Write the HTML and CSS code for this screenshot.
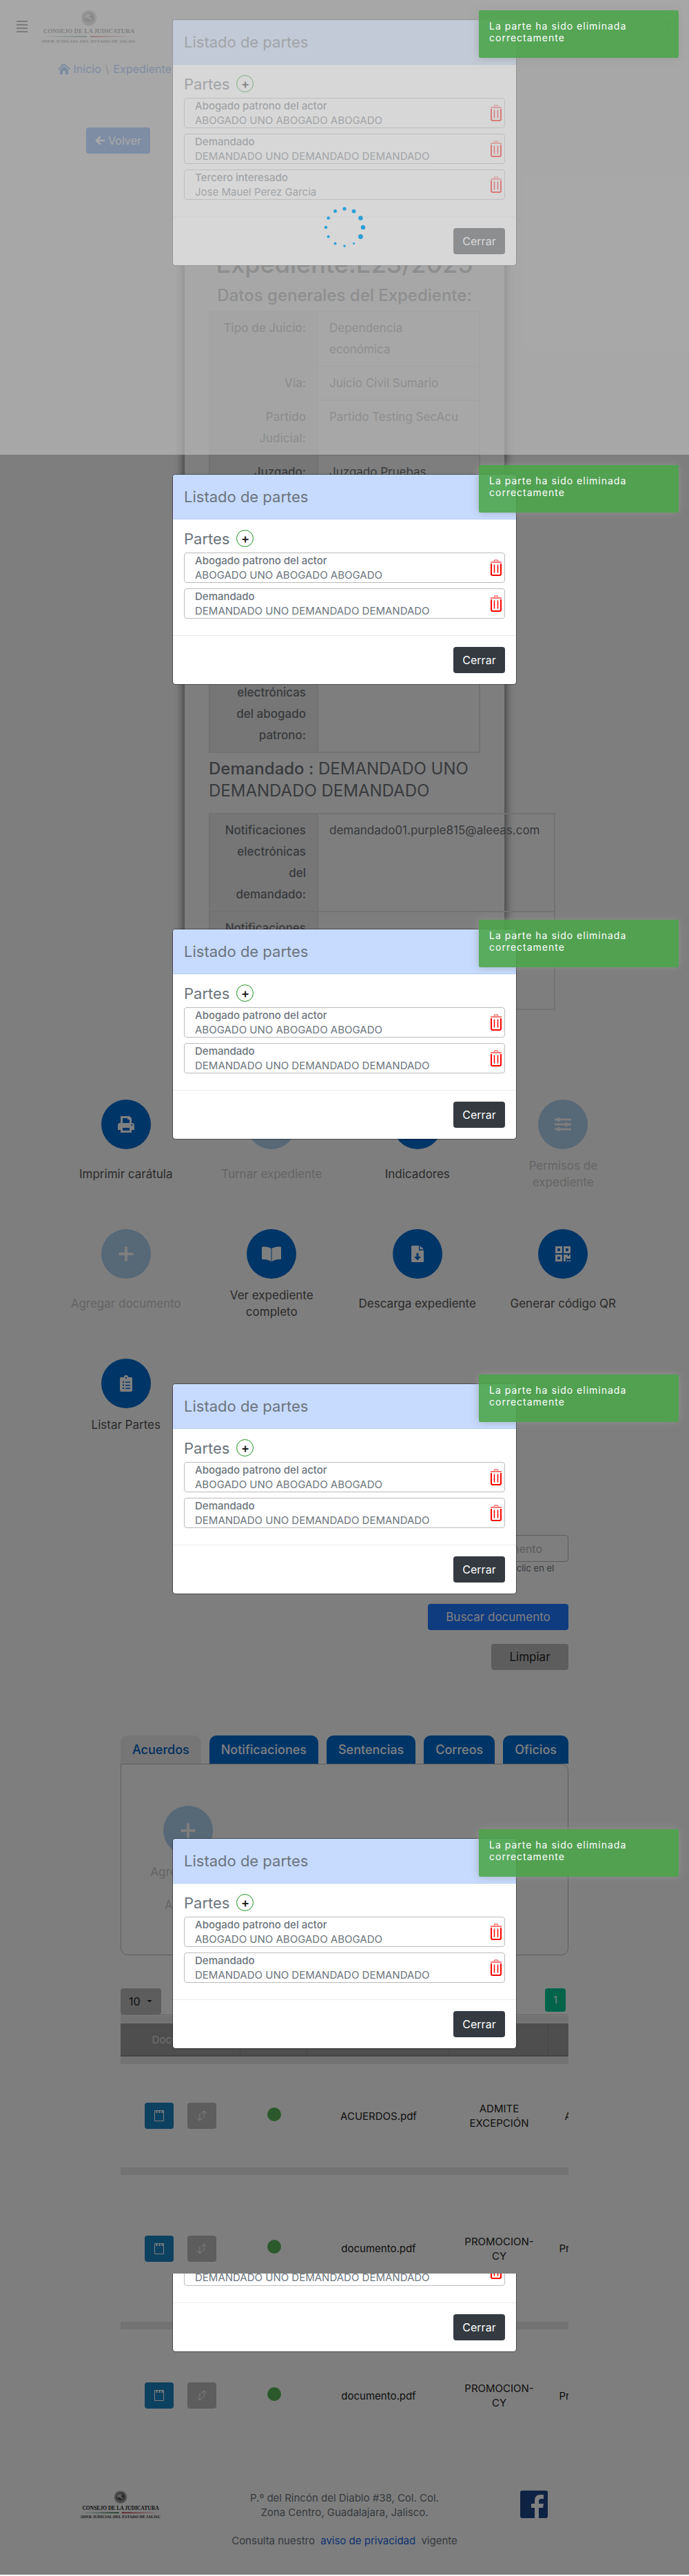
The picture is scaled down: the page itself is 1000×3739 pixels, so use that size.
FILE: index.html
```html
<!DOCTYPE html>
<html lang="es">
<head>
<meta charset="utf-8">
<meta name="viewport" content="width=device-width, initial-scale=1">
<title>Expediente E23/2025</title>
<link rel="stylesheet" href="styles.css">
</head>
<body>
<svg width="0" height="0" class="defs" aria-hidden="true">
  <defs>
    <linearGradient id="green" x1="0" x2="1"><stop offset="0" stop-color="#2c6e49" stop-opacity="0"/><stop offset="1" stop-color="#14602f"/></linearGradient>
    <linearGradient id="red" x1="0" x2="1"><stop offset="0" stop-color="#a8141c"/><stop offset="1" stop-color="#c03038" stop-opacity="0"/></linearGradient>
  </defs>
  <symbol id="seal" viewBox="0 0 138 48">
    <circle cx="69" cy="11" r="11" fill="#8a8a8a"/>
    <circle cx="69" cy="11" r="9.5" fill="none" stroke="#ddd" stroke-width=".8"/>
    <circle cx="69" cy="11" r="7.5" fill="#555"/>
    <path d="M63 8c3-4 8-4 10 0-3-1-4 0-3 2l4 3-3 1-4-3-4 1zM62 14c4 4 10 4 14-1-2 6-11 7-14 1z" fill="#bbb"/>
    <path d="M0 38.500L10 37h56v2H10z" fill="url(#green)"/>
    <path d="M71 37h56l10 1.500L127 39H71z" fill="url(#red)"/>
  </symbol>
  <symbol id="trash" viewBox="0 0 16 24">
    <path d="M5 3.500L6 1h4l1 2.500" fill="none" stroke="#f77" stroke-width="1.500"/>
    <path d="M0 4h16" stroke="#f77" stroke-width="2"/>
    <path d="M1 6v15q0 2 2 2h10q2 0 2-2V6" fill="none" stroke="#f00" stroke-width="2"/>
    <path d="M5.500 7.500v12M10.500 7.500v12" stroke="#f00" stroke-width="1.500"/>
  </symbol>
  <symbol id="cross" viewBox="0 0 24 24"><path d="M12 3v18M3 12h18" stroke="#fff" stroke-width="4" stroke-linecap="round"/></symbol>
  <symbol id="pad" viewBox="0 0 16 18"><path d="M1.500 1.500h13v15h-13z" fill="none" stroke="#fff"/><path d="M3.500 3.500h10" stroke="#fff" stroke-width="3" stroke-dasharray="2 2"/></symbol>
  <symbol id="swap" viewBox="0 0 16 18"><path d="M5 6v10M1 12l4 4 4-4M11 12V2M7 6l4-4 4 4" fill="none" stroke="#fff"/></symbol>
</svg>

<div class="page">
  <header class="top">
    <button class="menu" aria-label="Menú"><span></span><span></span><span></span><span></span></button>
    <svg class="logo" viewBox="0 0 138 48"><use href="#seal"/><text x="69" y="33" text-anchor="middle" class="logo-main">CONSEJO DE LA JUDICATURA</text><text x="69" y="47" text-anchor="middle" class="logo-sub">PODER JUDICIAL DEL ESTADO DE JALISCO</text></svg>
    <span class="user">VALDEZ</span>
  </header>

  <nav class="crumbs">
    <a href="#"><svg width="18" height="16" viewBox="0 0 18 16"><path d="M9 0l9 8-1.200 1.300L9 2.500 1.200 9.300 0 8l5-4.500V1h2v1zM9 4l6 5.200V16h-4v-5H7v5H3V9.200z" fill="currentColor"/></svg> Inicio</a>
    <span>\</span>
    <a href="#">Expediente</a>
  </nav>

  <button class="back"><svg width="14" height="14" viewBox="0 0 14 14"><path d="M7.500 1.500L2 7l5.500 5.500M2 7h12" fill="none" stroke="#fff" stroke-width="2.600"/></svg> Volver</button>

  <main>
    <section class="card">
      <h1>Expediente:E23/2025</h1>
      <h2>Datos generales del Expediente:</h2>
      <table class="data">
        <tr><th>Tipo de Juicio:</th><td>Dependencia<br>económica</td></tr>
        <tr><th>Vía:</th><td>Juicio Civil Sumario</td></tr>
        <tr><th>Partido<br>Judicial:</th><td>Partido Testing SecAcu</td></tr>
        <tr><th>Juzgado:</th><td>Juzgado Pruebas<br>SecAcu</td></tr>
      </table>
      <h3 class="lawyer"><b>Abogado patrono del actor :</b> ABOGADO UNO ABOGADO</h3>
      <table class="data">
        <tr><th>Notificaciones<br>electrónicas<br>del abogado<br>patrono:</th><td></td></tr>
      </table>
      <h3><b>Demandado :</b> DEMANDADO UNO DEMANDADO DEMANDADO</h3>
      <table class="data wide">
        <tr><th>Notificaciones<br>electrónicas<br>del<br>demandado:</th><td>demandado01.purple815@aleeas.com</td></tr>
        <tr><th>Notificaciones<br>electrónicas<br>del abogado<br>patrono:</th><td></td></tr>
      </table>
    </section>

    <section class="actions">
      <button><i><svg width="24" height="24" viewBox="0 0 24 24"><path d="M4 0h13l3 3v7h2l2 2v8h-4v4H4v-4H0v-8l2-2h2zM7 3v7h10V5h-3V3zM7 17v4h10v-4zM19.500 12v2h2v-2z" fill="#fff" fill-rule="evenodd"/></svg></i><span>Imprimir carátula</span></button>
      <button disabled><i><svg width="24" height="24"><use href="#cross"/></svg></i><span>Turnar expediente</span></button>
      <button><i><svg width="24" height="24" viewBox="0 0 24 24"><path d="M2 2v20h20M7 18v-6M12 18V7M17 18v-9" fill="none" stroke="#fff" stroke-width="3"/></svg></i><span>Indicadores</span></button>
      <button disabled><i><svg width="24" height="24" viewBox="0 0 24 24"><path d="M0 5h24M0 12h24M0 19h24M6 2v6M17 9v6M6 16v6" stroke="#fff" stroke-width="3"/></svg></i><span>Permisos de<br>expediente</span></button>
      <button disabled><i><svg width="24" height="24"><use href="#cross"/></svg></i><span>Agregar documento</span></button>
      <button><i><svg width="28" height="22" viewBox="0 0 28 22"><path d="M13.500 3C10 1 5 .5 1.500.5Q0 .5 0 2v16q0 1 1.500 1c4 0 8 .5 12 3zM14.500 3C18 1 23 .5 26.500.5Q28 .5 28 2v16q0 1-1.500 1c-4 0-8 .5-12 3z" fill="#fff"/></svg></i><span>Ver expediente<br>completo</span></button>
      <button><i><svg width="18" height="24" viewBox="0 0 18 24"><path d="M1.500 0H11v7h7v15.500q0 1.500-1.500 1.500h-15Q0 24 0 22.500v-21Q0 0 1.500 0zM12.500 0L18 5.500h-5.500zM7.500 11v5H4l5 5.500 5-5.500h-3.500v-5z" fill="#fff" fill-rule="evenodd"/></svg></i><span>Descarga expediente</span></button>
      <button><i><svg width="22" height="22" viewBox="0 0 22 22"><path d="M0 0h10v10H0zM3 3v4h4V3zM12 0h10v10H12zM15 3v4h4V3zM0 12h10v10H0zM3 15v4h4v-4zM12 12h6v2h2v-2h2v6h-6v-2h-1v6h-3zM17 20h2v2h-2zM20 20h2v2h-2z" fill="#fff" fill-rule="evenodd"/></svg></i><span>Generar código QR</span></button>
      <button><i><svg width="18" height="24" viewBox="0 0 18 24"><path d="M2 3h4a3 3 0 016 0h4q2 0 2 2v17q0 2-2 2H2q-2 0-2-2V5q0-2 2-2zM8 3h2v2H8zM4 9v2h2V9zM8 9.500V11h7V9.500zM4 13.500v2h2v-2zM8 14v1.500h7V14zM4 18v2h2v-2zM8 18.500V20h7v-1.500z" fill="#fff" fill-rule="evenodd"/></svg></i><span>Listar Partes</span></button>
    </section>

    <form class="search">
      <input type="text" id="doc" placeholder="Nombre del documento">
      <label for="doc">Presiona enter o haz clic en el<br>botón</label>
      <button type="button" class="find">Buscar documento</button>
      <button type="button" class="clear">Limpiar</button>
    </form>

    <section class="docs">
      <nav class="tabs">
        <button class="on">Acuerdos</button><button>Notificaciones</button><button>Sentencias</button><button>Correos</button><button>Oficios</button>
      </nav>
      <div class="panel">
        <button class="add" disabled><i><svg width="24" height="24"><use href="#cross"/></svg></i><span>Agregar texto<br>como<br>Acuerdo</span></button>
      </div>
      <div class="pager">
        <select aria-label="Registros por página"><option>10</option></select>
        <button>1</button>
      </div>
      <div class="scroll">
        <table class="grid">
          <colgroup><col class="c1"><col class="c2"><col class="c3"><col class="c4"><col class="c5"></colgroup>
          <thead><tr><th>Documento</th><th></th><th>Nombre</th><th>Materia</th><th></th></tr></thead>
          <tbody>
            <tr class="r1"><td><div class="tools"><button aria-label="Ver"><svg width="16" height="18"><use href="#pad"/></svg></button><button class="off" aria-label="Mover"><svg width="16" height="18"><use href="#swap"/></svg></button></div></td><td><span class="dot"></span></td><td>ACUERDOS.pdf</td><td>ADMITE EXCEPCIÓN</td><td>Acuerdo</td></tr>
            <tr class="r2"><td><div class="tools"><button aria-label="Ver"><svg width="16" height="18"><use href="#pad"/></svg></button><button class="off" aria-label="Mover"><svg width="16" height="18"><use href="#swap"/></svg></button></div></td><td><span class="dot"></span></td><td>documento.pdf</td><td>PROMOCION-CY</td><td>Promoción</td></tr>
            <tr class="r3"><td><div class="tools"><button aria-label="Ver"><svg width="16" height="18"><use href="#pad"/></svg></button><button class="off" aria-label="Mover"><svg width="16" height="18"><use href="#swap"/></svg></button></div></td><td><span class="dot"></span></td><td>documento.pdf</td><td>PROMOCION-CY</td><td>Promoción</td></tr>
          </tbody>
        </table>
      </div>
    </section>
  </main>

  <footer class="foot">
    <svg class="foot-logo" viewBox="0 0 138 48"><use href="#seal"/><text x="69" y="33" text-anchor="middle" class="logo-main">CONSEJO DE LA JUDICATURA</text><text x="69" y="47" text-anchor="middle" class="logo-sub">PODER JUDICIAL DEL ESTADO DE JALISCO</text></svg>
    <p>P.º del Rincón del Diablo #38, Col. Col.<br>Zona Centro, Guadalajara, Jalisco.</p>
    <a href="#" aria-label="Facebook"><svg width="40" height="40" viewBox="0 0 40 40"><rect width="40" height="40" rx="3" fill="#1d4489"/><path d="M21 40V25h-5v-6h5v-4c0-6 3-9 8-9h5v6h-3c-3 0-4 1-4 4v3h7l-1 6h-6v15z" fill="#fff"/></svg></a>
    <p class="privacy">Consulta nuestro <a href="#">aviso de privacidad</a> vigente</p>
  </footer>
</div>

<div class="overlay">
  <div class="view">
    <div class="modal" role="dialog" aria-label="Listado de partes">
      <h4>Listado de partes</h4>
      <div class="body">
        <div class="parts">Partes <button aria-label="Agregar parte">+</button></div>
        <div class="item"><p><b>Abogado patrono del actor</b>ABOGADO UNO ABOGADO ABOGADO</p><button aria-label="Eliminar"><svg width="16" height="24"><use href="#trash"/></svg></button></div>
        <div class="item"><p><b>Demandado</b>DEMANDADO UNO DEMANDADO DEMANDADO</p><button aria-label="Eliminar"><svg width="16" height="24"><use href="#trash"/></svg></button></div>
        <div class="item"><p><b>Tercero interesado</b>Jose Mauel Perez Garcia</p><button aria-label="Eliminar"><svg width="16" height="24"><use href="#trash"/></svg></button></div>
      </div>
      <div class="actions-row"><button>Cerrar</button></div>
    </div>
    <div class="veil">
      <svg width="60" height="60" viewBox="-30 -30 60 60" fill="#2a9fd8"><circle cx="27" r="3.300"/><circle cx="23.400" cy="13.500" r="3.400"/><circle cx="13.500" cy="23.400" r="1.500"/><circle cy="27" r="1.700"/><circle cx="-13.500" cy="23.400" r="1.900"/><circle cx="-23.400" cy="13.500" r="2"/><circle cx="-27" r="2.200"/><circle cx="-23.400" cy="-13.500" r="2.300"/><circle cx="-13.500" cy="-23.400" r="2.500"/><circle cy="-27" r="2.600"/><circle cx="13.500" cy="-23.400" r="2.900"/><circle cx="23.400" cy="-13.500" r="3.200"/></svg>
    </div>
    <div class="toast" role="status">La parte ha sido eliminada correctamente</div>
  </div>

  <div class="view">
    <div class="modal" role="dialog" aria-label="Listado de partes">
      <h4>Listado de partes</h4>
      <div class="body">
        <div class="parts">Partes <button aria-label="Agregar parte">+</button></div>
        <div class="item"><p><b>Abogado patrono del actor</b>ABOGADO UNO ABOGADO ABOGADO</p><button aria-label="Eliminar"><svg width="16" height="24"><use href="#trash"/></svg></button></div>
        <div class="item"><p><b>Demandado</b>DEMANDADO UNO DEMANDADO DEMANDADO</p><button aria-label="Eliminar"><svg width="16" height="24"><use href="#trash"/></svg></button></div>
      </div>
      <div class="actions-row"><button>Cerrar</button></div>
    </div>
    <div class="toast" role="status">La parte ha sido eliminada correctamente</div>
  </div>

  <div class="view">
    <div class="modal" role="dialog" aria-label="Listado de partes">
      <h4>Listado de partes</h4>
      <div class="body">
        <div class="parts">Partes <button aria-label="Agregar parte">+</button></div>
        <div class="item"><p><b>Abogado patrono del actor</b>ABOGADO UNO ABOGADO ABOGADO</p><button aria-label="Eliminar"><svg width="16" height="24"><use href="#trash"/></svg></button></div>
        <div class="item"><p><b>Demandado</b>DEMANDADO UNO DEMANDADO DEMANDADO</p><button aria-label="Eliminar"><svg width="16" height="24"><use href="#trash"/></svg></button></div>
      </div>
      <div class="actions-row"><button>Cerrar</button></div>
    </div>
    <div class="toast" role="status">La parte ha sido eliminada correctamente</div>
  </div>

  <div class="view">
    <div class="modal" role="dialog" aria-label="Listado de partes">
      <h4>Listado de partes</h4>
      <div class="body">
        <div class="parts">Partes <button aria-label="Agregar parte">+</button></div>
        <div class="item"><p><b>Abogado patrono del actor</b>ABOGADO UNO ABOGADO ABOGADO</p><button aria-label="Eliminar"><svg width="16" height="24"><use href="#trash"/></svg></button></div>
        <div class="item"><p><b>Demandado</b>DEMANDADO UNO DEMANDADO DEMANDADO</p><button aria-label="Eliminar"><svg width="16" height="24"><use href="#trash"/></svg></button></div>
      </div>
      <div class="actions-row"><button>Cerrar</button></div>
    </div>
    <div class="toast" role="status">La parte ha sido eliminada correctamente</div>
  </div>

  <div class="view">
    <div class="modal" role="dialog" aria-label="Listado de partes">
      <h4>Listado de partes</h4>
      <div class="body">
        <div class="parts">Partes <button aria-label="Agregar parte">+</button></div>
        <div class="item"><p><b>Abogado patrono del actor</b>ABOGADO UNO ABOGADO ABOGADO</p><button aria-label="Eliminar"><svg width="16" height="24"><use href="#trash"/></svg></button></div>
        <div class="item"><p><b>Demandado</b>DEMANDADO UNO DEMANDADO DEMANDADO</p><button aria-label="Eliminar"><svg width="16" height="24"><use href="#trash"/></svg></button></div>
      </div>
      <div class="actions-row"><button>Cerrar</button></div>
    </div>
    <div class="toast" role="status">La parte ha sido eliminada correctamente</div>
  </div>

  <div class="tail">
    <div class="modal">
      <div class="body">
        <div class="item"><p>DEMANDADO UNO DEMANDADO DEMANDADO</p><button aria-label="Eliminar"><svg width="16" height="24"><use href="#trash"/></svg></button></div>
      </div>
      <div class="actions-row"><button>Cerrar</button></div>
    </div>
  </div>
</div>
</body>
</html>
```
FILE: styles.css
```css
* { box-sizing: border-box; }
body { margin: 0; position: relative; background: #fdfdfd; color: #6c757d; font: 16px/24px Inter, "Open Sans", sans-serif; }
button, input, select { font: inherit; border: 0; padding: 0; margin: 0; background: none; color: inherit; }
a { color: #1a66dd; text-decoration: none; }
h1, h2, h3, h4, p { margin: 0; font-weight: 400; }
.defs { position: absolute; }
.logo-main { font: 700 9px "Liberation Serif", serif; fill: #222; }
.logo-sub { font: 700 7px "Liberation Serif", serif; fill: #333; }

.page { overflow: hidden; }
.top { display: flex; align-items: center; height: 78px; padding: 0 24px; }
.menu { display: flex; flex-direction: column; gap: 2px; width: 16px; margin-right: 20px; }
.menu span { height: 2px; margin-bottom: 1px; background: #111; }
.logo { width: 138px; height: 48px; }
.user { margin-left: auto; color: #444; }
.crumbs { display: flex; align-items: center; gap: 6px; padding: 10px 84px; }
.crumbs svg { vertical-align: -2px; }
.back { display: flex; align-items: center; justify-content: center; gap: 5px; width: 93px; height: 38px; margin: 63px 0 22px 125px; border-radius: 4px; background: #1f6fe8; color: #fff; }

.card { width: 464px; margin: 0 auto; padding: 116px 35px 56px; box-shadow: 0 0 14px rgba(0,0,0,.7); color: #70757a; }
.card h1 { margin-bottom: 8px; font-size: 36px; line-height: 44px; font-weight: 500; text-align: center; white-space: nowrap; }
.card h2 { margin: 0 -10px 6px; font-size: 24px; line-height: 32px; font-weight: 500; text-align: center; white-space: nowrap; }
.data { width: 100%; border-collapse: collapse; border: 2px solid #e4e4e4; font-size: 17px; line-height: 31px; table-layout: fixed; }
.data th { width: 157px; background: #ededed; text-align: right; font-weight: 500; }
.data th, .data td { border: 2px solid #e4e4e4; padding: 8px 16px; vertical-align: top; }
.wide { width: 503px; }
.card h3 { font-size: 24px; line-height: 32px; padding: 7px 0 16px; }
.card h3 b { font-weight: 500; }
.card .lawyer { margin-top: 120px; }

.actions { display: grid; grid-template-columns: repeat(4, 1fr); row-gap: 56px; margin: 74px 77px 0; }
.actions button, .add { display: flex; flex-direction: column; align-items: center; gap: 12px; min-height: 132px; color: #555; font-size: 17px; }
.actions span { margin: auto; text-align: center; }
.actions button:last-child span { margin-top: 0; }
i { display: flex; align-items: center; justify-content: center; width: 72px; height: 72px; border-radius: 50%; background: #006acf; flex: none; }
:disabled { opacity: .3; }

.search { display: flex; flex-direction: column; align-items: flex-end; margin: 124px 175px 0; }
.search input { width: 325px; height: 39px; border: 1px solid #bbb; border-radius: 4px; padding: 0 12px 0 108px; }
.search input::placeholder { color: #bbb; opacity: 1; }
.search label { width: 325px; padding-left: 120px; font-size: 13px; line-height: 18px; }
.find, .clear { height: 38px; border-radius: 4px; font-size: 17px; }
.find { margin-top: 25px; width: 204px; background: #1e76ff; color: #fff; }
.clear { margin-top: 20px; width: 112px; background: #bbb; color: #222; }

.docs { margin: 95px 175px 0; }
.tabs { display: flex; gap: 12px; }
.tabs button { flex: auto; height: 41px; padding: 0 10px; border-radius: 10px 10px 0 0; background: #006acf; color: #fff; font-size: 18px; font-weight: 500; }
.tabs .on { background: #ededed; color: #005cc0; }
.panel { height: 278px; padding: 60px 25px; border: 1px solid #bbb; border-radius: 0 10px 10px 10px; }
.add { width: 144px; }
.pager { display: flex; justify-content: space-between; margin-top: 48px; padding-right: 4px; border-bottom: 1px solid #ccc; }
.pager select { width: 59px; height: 38px; padding: 0 12px; appearance: none; border-radius: 4px; color: #222; background: #bbb conic-gradient(from 315deg at 50% 100%, #222 25%, transparent 0) 38px 17px / 8px 4px no-repeat; }
.pager button { width: 30px; height: 34px; border-radius: 4px; background: #00c896; color: #fff; font-size: 15px; }
.scroll { overflow: hidden; padding-top: 1px; }
.grid { width: 728px; margin-bottom: -11px; table-layout: fixed; border-collapse: separate; border-spacing: 0 11px; font-size: 15px; line-height: 21px; text-align: center; color: #222; background: #e6e6e6; }
.c1 { width: 174px; } .c2 { width: 97px; } .c3 { width: 207px; } .c4 { width: 143px; }
.grid th { height: 48px; padding: 0 8px; background: #9c9c9c; color: #ddd; border-right: 1px solid #8c8c8c; border-bottom: 2px solid #888; font-weight: 400; }
.grid td { padding: 0 12px; background: #fdfdfd; }
.r1 td { height: 150px; } .r2 td { height: 213px; } .r3 td { height: 192px; }
.tools { display: flex; gap: 20px; justify-content: center; }
.tools button { display: flex; align-items: center; justify-content: center; width: 42px; height: 38px; flex: none; border-radius: 4px; background: #1a82c0; }
.tools .off { background: #bbb; }
.dot { display: inline-block; width: 20px; height: 20px; border-radius: 50%; background: #56b356; }

.foot { display: grid; grid-template-columns: 1fr 1fr 1fr; justify-items: center; padding: 42px 117px 39px; text-align: center; font-size: 15px; line-height: 21px; }
.foot p { white-space: nowrap; }
.foot-logo { width: 116px; height: 41px; justify-self: start; }
.foot > a { justify-self: end; margin-right: 88px; height: 40px; }
.foot .privacy { grid-column: 1 / -1; margin-top: 20px; }
.privacy a { margin: 0 4px; }

.overlay { position: absolute; inset: 0; overflow: hidden; background: rgba(0,0,0,.5); }
.view { position: relative; height: 660px; padding-top: 28px; }
.modal { width: 500px; margin: 0 auto; border: 1px solid rgba(0,0,0,.4); border-radius: 5px; background: #fff; background-clip: padding-box; overflow: hidden; }
.modal h4 { height: 65px; padding: 0 16px; line-height: 64px; font-size: 22px; background: #c6dbff; border-bottom: 1px solid #b5cdf2; }
.body { display: flex; flex-direction: column; gap: 8px; padding: 15px 16px 24px; }
.parts { display: flex; align-items: center; gap: 10px; height: 25px; font-size: 22px; }
.parts button { width: 25px; height: 25px; border: 1px solid #18941f; border-radius: 50%; font-size: 18px; line-height: 20px; font-weight: 600; color: #222; }
.item { display: flex; align-items: center; justify-content: space-between; height: 44px; padding: 0 4px 0 15px; border: 1px solid #bbb; border-radius: 4px; font-size: 15px; line-height: 21px; }
.item b { display: block; font-weight: 500; }
.item button { height: 24px; }
.actions-row { display: flex; justify-content: flex-end; padding: 16px; border-top: 1px solid #e9ecef; }
.actions-row button { width: 75px; height: 38px; border-radius: 4px; background: #343a40; color: #fff; }
.veil { position: absolute; inset: 0; display: flex; align-items: center; justify-content: center; background: rgba(192,192,192,.63); }
.toast { position: absolute; top: 15px; right: 15px; width: 290px; height: 69px; padding: 14px 15px; border-radius: 2px; background: rgba(76,165,76,.9); color: #fff; box-shadow: 0 0 12px rgba(153,153,153,.7); font-size: 14px; line-height: 17px; letter-spacing: 1px; }
.tail { display: flex; align-items: flex-end; height: 114px; overflow: hidden; }
.tail .item { align-items: flex-end; padding-bottom: 1px; }
.tail .item button { height: 36px; }
```
